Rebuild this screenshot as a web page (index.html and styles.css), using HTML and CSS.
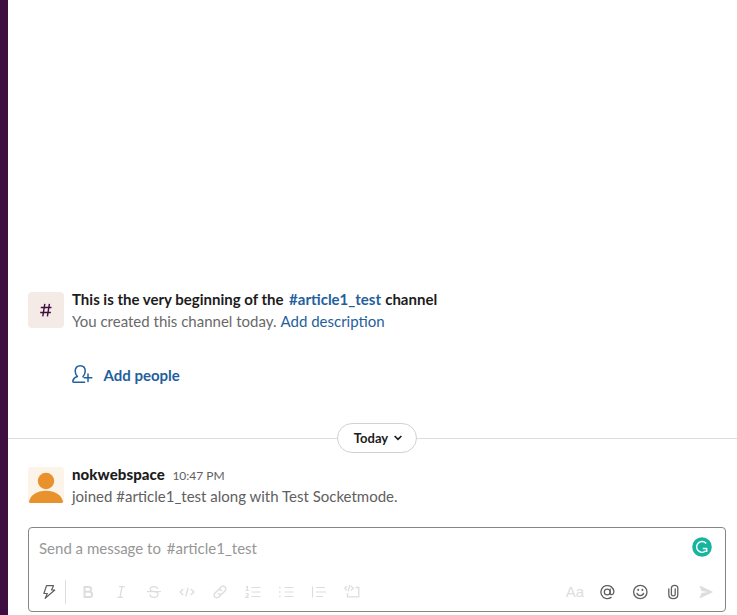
FILE: index.html
```html
<!DOCTYPE html>
<html lang="en">
<head>
<meta charset="utf-8">
<title>article1_test</title>
<link rel="stylesheet" href="styles.css">
</head>
<body>
<div class="app">
  <aside class="rail"></aside>
  <main class="channel">
    <section class="intro">
      <div class="hash-tile">
        <svg width="20" height="20" viewBox="0 0 20 20" fill="none" stroke="currentColor" stroke-width="1.4"><path d="M8.800 3.800 6.800 16.300M13.400 3.800 11.400 16.300M4.800 7.500h10.700M4.200 12.500h10.700"/></svg>
      </div>
      <div class="intro-text">
        <h1 class="intro-title">This is the very beginning of the <span class="channel-link">#article1_test</span> channel</h1>
        <p class="intro-sub">You created this channel today. <a class="link">Add description</a></p>
        <a class="add-people">
          <svg width="22" height="20" viewBox="0 0 22 20" fill="none" stroke="currentColor" stroke-width="1.5" stroke-linecap="round" stroke-linejoin="round"><path d="M12.600 18.200H1.800c-.8 0-1.100-.6-.9-1.400.5-2.100 2-3.600 4.500-4.200C4 11.200 3.200 9.300 3.200 7c0-3.300 2-5.300 5-5.300s5 2 5 5.300c0 2.300-.8 4.200-2.200 5.600M16 10v7.600M12.200 13.800h7.600"/></svg>
          <span>Add people</span>
        </a>
      </div>
    </section>
    <div class="divider">
      <span class="day-pill">Today
        <svg width="8" height="6" viewBox="0 0 8 6" fill="none" stroke="currentColor" stroke-width="1.7"><path d="M.6 1 4 4.300 7.400 1"/></svg>
      </span>
    </div>
    <article class="message">
      <svg class="avatar" width="36" height="36" viewBox="0 0 36 36"><rect width="36" height="36" rx="3" fill="#fcf3e9"/><circle cx="18" cy="14" r="8.200" fill="#e8912d"/><path d="M1 34.500C2.500 28 9 23.800 18 23.800S33.500 28 35 34.500Q35 36 33.500 36H2.500Q1 36 1 34.500z" fill="#e8912d"/></svg>
      <div class="message-body">
        <div class="message-head"><b class="sender">nokwebspace</b><span class="time">10:47 PM</span></div>
        <p class="message-text">joined #article1_test along with Test Socketmode.</p>
      </div>
    </article>
    <section class="composer">
      <div class="input-row">
        <span class="placeholder">Send a message to <span class="placeholder-channel">#article1_test</span></span>
        <svg class="checker" width="20" height="20" viewBox="0 0 20 20"><circle cx="10" cy="10" r="9.800" fill="#15b5a0"/><path d="M14.200 6.500A5.400 5.400 0 1 0 13.800 13.800M10.800 11.500h4M14.700 11v4" fill="none" stroke="#fff" stroke-width="1.400"/></svg>
      </div>
      <div class="toolbar">
        <span class="tool shortcut"><svg width="20" height="20" viewBox="0 0 20 20" fill="none" stroke="currentColor" stroke-width="1.200" stroke-linejoin="round"><path d="M7.500 3.700h7L12.500 8h3.300L6.200 16.300 8.300 11.500H4.900z"/></svg></span>
        <span class="separator"></span>
        <div class="formats">
          <span class="tool"><svg width="20" height="20" viewBox="0 0 20 20" fill="none" stroke="currentColor" stroke-width="2"><path d="M6.500 5h4.300a2.400 2.400 0 0 1 0 4.800H6.500zM6.500 9.800h5a2.600 2.600 0 0 1 0 5.200h-5z"/></svg></span>
          <span class="tool"><svg width="20" height="20" viewBox="0 0 20 20" fill="none" stroke="currentColor" stroke-width="1.300"><path d="M8 4.700h5.800M6.200 15.300H12M11 4.700 9 15.300"/></svg></span>
          <span class="tool"><svg width="20" height="20" viewBox="0 0 20 20" fill="none" stroke="currentColor" stroke-width="1.300"><path d="M3 9.700h14M13.700 7.200C13.400 5.400 12 4.600 10 4.600c-2.200 0-3.700 1-3.700 2.600 0 1.400 1 2.100 3.700 2.500 2.800.5 4 1.300 4 2.900 0 1.700-1.600 2.800-4 2.800-2.300 0-3.900-1.100-4.100-3"/></svg></span>
          <span class="tool"><svg width="20" height="20" viewBox="0 0 20 20" fill="none" stroke="currentColor" stroke-width="1.300"><path d="M6.200 7 3.200 10l3 3M13.800 7l3 3-3 3M11.300 5.700 8.700 14.300"/></svg></span>
          <span class="tool"><svg width="20" height="20" viewBox="0 0 20 20" fill="none" stroke="currentColor" stroke-width="1.400" stroke-linecap="round"><path d="M9 7.100l2.200-2.200a2.750 2.750 0 0 1 3.900 3.900l-2.700 2.700a2.750 2.750 0 0 1-3.900 0M11 12.900l-2.200 2.200a2.750 2.750 0 0 1-3.900-3.900l2.700-2.700a2.750 2.750 0 0 1 3.900 0"/></svg></span>
          <span class="tool"><svg width="20" height="20" viewBox="0 0 20 20" fill="none" stroke="currentColor" stroke-width="1.200"><path d="M8.500 5.500h9M8.500 10h9M8.500 14.500h9M3 5.300l1.300-.8v4M2.500 8.500h3.400M2.800 12.200c.2-.7 2.600-.9 2.600.3 0 .8-1.600 1.500-2.600 2.900h3"/></svg></span>
          <span class="tool"><svg width="20" height="20" viewBox="0 0 20 20" fill="none" stroke="currentColor" stroke-width="1.200"><path d="M8.500 5.500h9M8.500 10h9M8.500 14.500h9"/><path stroke-width="1.600" d="M3 5.500h1.600M3 10h1.600M3 14.500h1.600"/></svg></span>
          <span class="tool"><svg width="20" height="20" viewBox="0 0 20 20" fill="none" stroke="currentColor" stroke-width="1.200"><path d="M3.500 4.500v11M7 5.500h9M7 10h10M7 14.500h7"/></svg></span>
          <span class="tool"><svg width="20" height="20" viewBox="0 0 20 20" fill="none" stroke="currentColor" stroke-width="1.300"><path d="M13.500 5.500h3.300v9.300H5.500V11M5 4 2.800 6.300 5 8.500M9 4l2.200 2.300L9 8.500M7.800 3.200 6.300 9.300"/></svg></span>
        </div>
        <div class="actions">
          <span class="tool aa">Aa</span>
          <span class="tool dark"><svg width="20" height="20" viewBox="0 0 20 20" fill="none" stroke="currentColor" stroke-width="1.300" stroke-linecap="round"><circle cx="10.200" cy="10" r="2.900"/><path d="M13.200 7.200v3.800c0 2.600 3.700 2.100 3.700-1.200A6.500 6.500 0 1 0 14.100 15.400"/></svg></span>
          <span class="tool dark"><svg width="20" height="20" viewBox="0 0 20 20" fill="none" stroke="currentColor" stroke-width="1.300" stroke-linecap="round"><circle cx="10.300" cy="10" r="6.700"/><path d="M7 11.300c.9 3 5.700 3 6.600 0"/><path stroke-width="1.900" d="M8.200 7.800v.2M12.400 7.800v.2"/></svg></span>
          <span class="tool dark"><svg width="20" height="20" viewBox="0 0 20 20" fill="none" stroke="currentColor" stroke-width="1.300" stroke-linecap="round"><path d="M5.800 7v5.600c0 5.400 9 5.400 9 0V6.200c0-3.800-6.400-3.800-6.400 0v6c0 2.300 3.800 2.300 3.800 0V6.800"/></svg></span>
          <span class="tool send"><svg width="20" height="20" viewBox="0 0 20 20" fill="currentColor"><path d="M4.100 3.700 17.200 10 4.100 16.300q-.5 0-.4-.5L5.400 11l6.300-1L5.400 9 3.700 4.200q-.1-.5.4-.5z"/></svg></span>
        </div>
      </div>
    </section>
  </main>
</div>
</body>
</html>
```

FILE: styles.css
```css
* { box-sizing: border-box; }
body { margin: 0; background: #fff; color: #1d1c1d; font: 15px/22px Lato, "Liberation Sans", sans-serif; }
h1, p { margin: 0; font-size: 15px; }
svg { display: block; flex: none; }
.app { display: flex; height: 615px; overflow: hidden; }
.rail { width: 8px; flex: none; background: #3f0e40; }
.channel { flex: 1; display: flex; flex-direction: column; justify-content: flex-end; padding-bottom: 3px; }
.intro { display: flex; gap: 8px; padding-left: 20px; height: 131px; }
.hash-tile { width: 36px; height: 36px; border-radius: 4px; background: #f4ebe6; color: #3f0e40; display: flex; align-items: center; justify-content: center; }
.intro-text { margin-top: -4px; }
.intro-title { font-weight: 700; }
.channel-link { color: #1f609d; margin: 0 0.5px 0 2px; }
.intro-sub { color: #696969; }
.link { color: #1f609d; margin-left: 0.2px; }
.add-people { display: flex; align-items: center; gap: 9.5px; margin-top: 32px; color: #1f609d; font-weight: 700; }
.add-people svg { margin-top: -3px; }
.divider { height: 30px; display: flex; align-items: center; }
.divider::before, .divider::after { content: ""; height: 1px; flex: 1; background: #dddddd; }
.divider::before { flex: 0 0 329px; }
.day-pill { width: 80px; height: 30px; border: 1px solid #d2d2d2; border-radius: 15px; display: flex; align-items: center; justify-content: center; gap: 6px; padding-left: 2px; font-size: 13px; font-weight: 700; }
.message { display: flex; gap: 8px; padding-left: 20px; height: 60px; margin-top: 14px; }
.message-body { margin-top: -4px; }
.message-head { display: flex; align-items: baseline; gap: 7.5px; height: 22px; }
.sender { font-weight: 900; letter-spacing: 0.08px; }
.time { font-size: 12px; color: #616061; }
.message-text { color: #616061; }
.composer { width: 698px; height: 85px; margin-left: 20px; border: 1px solid #868686; border-radius: 4px; display: flex; flex-direction: column; justify-content: space-between; }
.input-row { display: flex; justify-content: space-between; padding: 9px 13px 0 10px; }
.placeholder { color: #979797; }
.placeholder-channel { margin-left: 2px; }
.toolbar { display: flex; align-items: center; height: 28px; margin-bottom: 5px; padding: 0 3px; }
.tool { width: 33px; display: flex; justify-content: center; color: #dddddd; }
.shortcut { color: #616061; }
.separator { width: 1px; height: 24px; background: #dddddd; }
.formats { display: flex; margin-left: 5px; }
.actions { display: flex; align-items: center; margin-left: auto; }
.dark { color: #616061; }
.aa { font-size: 15px; font-family: "Liberation Sans", sans-serif; padding-left: 3px; }
```
